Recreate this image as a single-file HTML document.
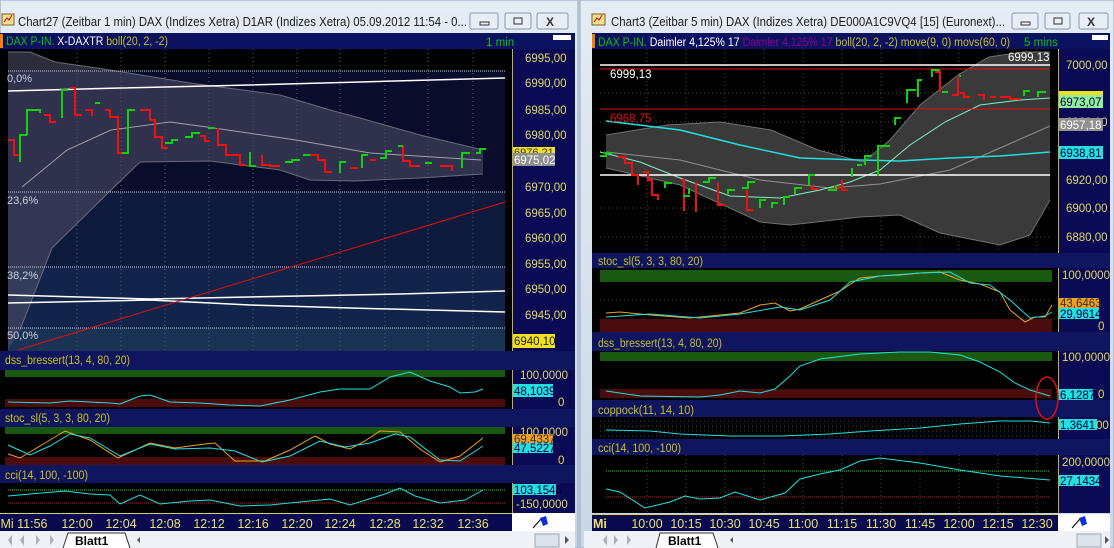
<!DOCTYPE html>
<html><head><meta charset="utf-8"><style>
html,body{margin:0;padding:0;background:#d6e0ea;}
svg{display:block;font-family:"Liberation Sans",sans-serif;}
</style></head><body>
<svg width="1114" height="548" viewBox="0 0 1114 548" xmlns="http://www.w3.org/2000/svg">
<defs>
<linearGradient id="tb" x1="0" y1="0" x2="0" y2="1"><stop offset="0" stop-color="#e4ecf4"/><stop offset="1" stop-color="#c9d7e6"/></linearGradient>
</defs>
<rect width="1114" height="548" fill="#d6e0ea"/>
<!-- ===== LEFT WINDOW ===== -->
<rect x="0" y="0" width="578" height="548" fill="url(#tb)" stroke="#8fa5bd"/>
<rect x="2" y="14" width="12" height="11" fill="#f0e090" stroke="#806020"/><path d="M4 22 l3 -4 l2 2 l3 -5" stroke="#c00" fill="none"/>
<text x="18" y="26" font-size="12.5" fill="#202020" textLength="449" lengthAdjust="spacingAndGlyphs">Chart27 (Zeitbar 1 min)  DAX (Indizes Xetra) D1AR (Indizes Xetra) 05.09.2012 11:54 - 0...</text>
<g fill="#e8eef5" stroke="#8898aa"><rect x="470" y="13" width="28" height="16" rx="2"/><rect x="505" y="13" width="26" height="16" rx="2"/><rect x="537" y="13" width="31" height="16" rx="2"/></g>
<rect x="480" y="22" width="9" height="3" fill="none" stroke="#333"/><rect x="514" y="18" width="8" height="6" fill="none" stroke="#333"/>
<text x="546" y="26" font-size="12" font-weight="bold" fill="#333">X</text>
<rect x="0" y="33" width="575" height="16" fill="#0c1260"/>
<rect x="0" y="34" width="3" height="14" fill="#f08000"/>
<rect x="553" y="35" width="18" height="5" fill="#fff"/>
<text x="6" y="45" font-size="11.5" textLength="162" lengthAdjust="spacingAndGlyphs"><tspan fill="#10c010">DAX P-IN.</tspan><tspan fill="#fff"> X-DAXTR</tspan><tspan fill="#c8c020"> boll(20, 2, -2)</tspan></text>
<text x="486" y="46" font-size="11.5" fill="#10c010">1 min</text>
<!-- main plot -->
<rect x="0" y="49" width="512" height="302" fill="#000"/>
<rect x="8" y="71" width="497" height="121" fill="#0a0c2c"/>
<rect x="8" y="192" width="497" height="75" fill="#0e1a3c"/>
<rect x="8" y="267" width="497" height="61" fill="#13244a"/>
<rect x="8" y="328" width="497" height="23" fill="#1a3254"/>
<g stroke="#5a6070" stroke-dasharray="1,3"><path d="M77 49V350M121 49V350M165 49V350M209 49V350M253 49V350M297 49V350M340 49V350M385 49V350M428 49V350M473 49V350"/></g>
<path d="M8 52 L30 52 L55 62 L110 70 L190 83 L280 95 L330 110 L360 118 L420 135 L483 150 L483 174 L420 178 L355 181 L310 180 L280 170 L210 161 L140 162 L111 190 L52 248 L20 330 L8 350 Z" fill="#50506a" fill-opacity="0.55"/>
<path d="M8 52 L30 52 L55 62 L110 70 L190 83 L280 95 L330 110 L360 118 L420 135 L483 150" stroke="#6a6a7a" fill="none"/>
<path d="M483 174 L420 178 L355 181 L310 180 L280 170 L210 161 L140 162 L111 190 L52 248 L20 330" stroke="#6a6a7a" fill="none"/>
<path d="M22 187 L67 150 L111 130 L170 122 L207 127 L296 140 L370 153 L481 160" stroke="#a0a0a8" fill="none"/>
<g stroke="#c8d0e0" stroke-dasharray="1,1"><path d="M8 71H505M8 192H505M8 267H505M8 328H505"/></g>
<g font-size="11" fill="#c8d0e0"><text x="7" y="82">0,0%</text><text x="7" y="204">23,6%</text><text x="7" y="279">38,2%</text><text x="7" y="339">50,0%</text></g>
<path d="M8 91 L120 88 L250 85 L360 82 L505 78" stroke="#fff" stroke-width="1.5" fill="none"/>
<path d="M8 295 L150 299 L300 296 L400 294 L505 291" stroke="#fff" stroke-width="1.5" fill="none"/>
<path d="M8 303 L150 300 L250 305 L350 308 L505 312" stroke="#fff" stroke-width="1.5" fill="none"/>
<path d="M18 350 L505 202" stroke="#e01010" fill="none"/>
<path d="M8 140H14V155H20M44 115H50V122H56M70 88H75V115H82M85 110H92V116M105 110H110V117H118V153H122M140 110H150V120H155V137H162V148H168M200 136H205V141H210M218 128V145H226V155H240V165H245M262 155V165H270V166H280M310 155H318V160H325V172H332M350 168H358M370 160H376M403 146V161H410V166H420M440 166H452V171" stroke="#f01010" stroke-width="2" fill="none"/>
<path d="M20 162V135H27M27 135V110H40V113M62 118V90H68M95 103H100M122 153H128V110H135M165 143H172V140H178M185 137H192V133H200M208 128H214M250 152V166H256M285 162H292V160H300M303 155H310M340 173V162H346M362 168V155H368M380 158H386V151H392M398 146H403M425 163H432M462 168V153H470M476 153H480V149H486" stroke="#10d010" stroke-width="2" fill="none"/>
<rect x="512" y="49" width="63" height="302" fill="#0a0a55"/>
<path d="M512.5 49V351" stroke="#c0b040"/>
<g font-size="11.5" fill="#e0d860">
<text x="525" y="62">6995,00</text><text x="525" y="87">6990,00</text><text x="525" y="114">6985,00</text><text x="525" y="139">6980,00</text>
<text x="525" y="191">6970,00</text><text x="525" y="217">6965,00</text><text x="525" y="242">6960,00</text><text x="525" y="268">6955,00</text><text x="525" y="293">6950,00</text><text x="525" y="319">6945,00</text></g>
<rect x="513" y="147" width="42" height="9" fill="#f0e020"/><text x="514" y="156" font-size="11" fill="#333">6976,21</text>
<rect x="513" y="153" width="42" height="13" fill="#909090"/><text x="514" y="164" font-size="11.5" fill="#fff">6975,02</text>
<rect x="513" y="334" width="42" height="14" fill="#f0e020"/><text x="514" y="345" font-size="11.5" fill="#222">6940,10</text>
<!-- dss -->
<rect x="0" y="351" width="575" height="19" fill="#101560"/>
<text x="5" y="364" font-size="11.5" fill="#c8c020" textLength="125" lengthAdjust="spacingAndGlyphs">dss_bressert(13, 4, 80, 20)</text>
<rect x="0" y="370" width="512" height="39" fill="#000"/>
<rect x="5" y="370" width="500" height="7" fill="#1a5a10"/><rect x="5" y="399" width="500" height="8" fill="#4a0c0c"/>
<path d="M8 402 L50 403 L70 401 L110 403 L120 404 L140 396 L150 395 L170 402 L200 403 L230 405 L260 406 L290 400 L320 392 L340 389 L370 389 L390 377 L410 372 L430 381 L450 387 L460 393 L475 392 L483 389" stroke="#20e0e0" fill="none"/>
<rect x="512" y="370" width="63" height="39" fill="#0a0a55"/><path d="M512.5 370V409" stroke="#c0b040"/>
<text x="520" y="379" font-size="11.5" fill="#e0d860">100,0000</text><text x="558" y="406" font-size="11.5" fill="#e0d860">0</text>
<rect x="513" y="384" width="40" height="13" fill="#20e0e0"/><text x="514" y="395" font-size="11.5" fill="#004">48,1039</text>
<!-- stoc -->
<rect x="0" y="409" width="575" height="18" fill="#101560"/>
<text x="5" y="422" font-size="11.5" fill="#c8c020" textLength="105" lengthAdjust="spacingAndGlyphs">stoc_sl(5, 3, 3, 80, 20)</text>
<rect x="0" y="427" width="512" height="38" fill="#000"/>
<rect x="5" y="427" width="500" height="7" fill="#1a5a10"/><rect x="5" y="457" width="500" height="8" fill="#4a0c0c"/>
<path d="M8 454 L20 458 L40 446 L65 431 L90 440 L118 458 L150 443 L175 448 L205 444 L215 443 L235 461 L265 461 L290 450 L315 436 L330 444 L350 449 L365 441 L380 431 L400 432 L420 449 L440 462 L460 456 L483 438" stroke="#f0a020" fill="none"/>
<path d="M8 445 L30 455 L50 446 L70 434 L90 438 L120 456 L150 444 L175 449 L210 448 L235 451 L262 462 L290 456 L320 441 L345 447 L370 443 L395 434 L410 437 L440 460 L460 461 L483 446" stroke="#20e0e0" fill="none"/>
<rect x="512" y="427" width="63" height="38" fill="#0a0a55"/><path d="M512.5 427V465" stroke="#c0b040"/>
<text x="520" y="436" font-size="11.5" fill="#e0d860">100,0000</text><text x="558" y="464" font-size="11.5" fill="#e0d860">0</text>
<rect x="513" y="434" width="40" height="10" fill="#f0a020"/><text x="514" y="443" font-size="11.5" fill="#333">69,4337</text>
<rect x="513" y="443" width="40" height="10" fill="#20e0e0"/><text x="514" y="452" font-size="11.5" fill="#004">47,5227</text>
<!-- cci -->
<rect x="0" y="465" width="575" height="18" fill="#101560"/>
<text x="5" y="479" font-size="11.5" fill="#c8c020" textLength="83" lengthAdjust="spacingAndGlyphs">cci(14, 100, -100)</text>
<rect x="0" y="483" width="512" height="30" fill="#000"/>
<path d="M8 490H505" stroke="#30e030" stroke-dasharray="1,1"/><path d="M8 503H505" stroke="#d02020" stroke-dasharray="1,1"/>
<path d="M8 496 L30 494 L65 491 L90 494 L110 495 L120 504 L140 495 L160 504 L190 501 L210 500 L240 506 L270 505 L300 502 L330 499 L350 505 L385 494 L400 488 L415 496 L440 503 L465 500 L483 490" stroke="#20e0e0" fill="none"/>
<rect x="512" y="483" width="63" height="30" fill="#0a0a55"/><path d="M512.5 483V513" stroke="#c0b040"/>
<rect x="513" y="484" width="43" height="11" fill="#20e0e0"/><text x="514" y="494" font-size="11.5" fill="#004">103,1545</text>
<text x="516" y="508" font-size="11.5" fill="#e0d860">-150,0000</text>
<rect x="0" y="513" width="512" height="18" fill="#0a0a50"/><path d="M0 513.5H512" stroke="#d8d060"/>
<g font-size="12.5" fill="#e8e070" text-anchor="middle"><text x="24" y="528">Mi 11:56</text><text x="77" y="528">12:00</text><text x="121" y="528">12:04</text><text x="165" y="528">12:08</text><text x="209" y="528">12:12</text><text x="253" y="528">12:16</text><text x="297" y="528">12:20</text><text x="340" y="528">12:24</text><text x="385" y="528">12:28</text><text x="428" y="528">12:32</text><text x="473" y="528">12:36</text></g>
<rect x="512" y="513" width="63" height="18" fill="#fff"/>
<path d="M533 528 L541 519" stroke="#000"/><path d="M540 518 L546 516 L548 524 L543 526Z" fill="#1030e0"/>
<rect x="0" y="531" width="575" height="17" fill="#eef2f6"/>
<g fill="#a8b0b8"><path d="M4 535V546M8 540l4 -5v11zM20 540l4 -5v11zM36 535l4 5l-4 5zM50 535l4 5l-4 5zM56 535V546"/></g>
<path d="M63 548 L68 533 H125 L130 548" fill="#fff" stroke="#333"/>
<text x="75" y="545" font-size="12" font-weight="bold" fill="#000">Blatt1</text>
<path d="M140 537l-3 3l3 3" fill="#555"/>
<rect x="535" y="534" width="24" height="13" fill="#dde3ea" stroke="#a0a8b0"/>
<path d="M565 536l4 4l-4 4z" fill="#555"/>
<!-- ===== RIGHT WINDOW ===== -->
<rect x="580" y="0" width="534" height="548" fill="url(#tb)" stroke="#8fa5bd"/>
<rect x="592" y="14" width="13" height="11" fill="#f0e090" stroke="#806020"/><path d="M594 22 l3 -4 l2 2 l3 -5" stroke="#c00" fill="none"/>
<text x="611" y="26" font-size="12.5" fill="#202020" textLength="394" lengthAdjust="spacingAndGlyphs">Chart3 (Zeitbar 5 min)  DAX (Indizes Xetra) DE000A1C9VQ4 [15] (Euronext)...</text>
<g fill="#e8eef5" stroke="#8898aa"><rect x="1012" y="13" width="26" height="16" rx="2"/><rect x="1045" y="13" width="25" height="16" rx="2"/><rect x="1079" y="13" width="29" height="16" rx="2"/></g>
<rect x="1021" y="22" width="9" height="3" fill="none" stroke="#333"/><rect x="1054" y="18" width="8" height="6" fill="none" stroke="#333"/>
<text x="1087" y="26" font-size="12" font-weight="bold" fill="#333">X</text>
<rect x="592" y="33" width="518" height="16" fill="#0c1260"/>
<rect x="592" y="34" width="3" height="14" fill="#f08000"/><rect x="1092" y="35" width="16" height="5" fill="#fff"/>
<text x="598" y="46" font-size="11.5" textLength="412" lengthAdjust="spacingAndGlyphs"><tspan fill="#10c010">DAX P-IN.</tspan><tspan fill="#fff"> Daimler  4,125% 17 </tspan><tspan fill="#900090">Daimler  4,125% 17 </tspan><tspan fill="#c8c020">boll(20, 2, -2) move(9, 0) movs(60, 0)</tspan></text>
<text x="1024" y="46" font-size="11.5" fill="#10c010">5 mins</text>
<rect x="592" y="49" width="466" height="204" fill="#000"/>
<g stroke="#4a4a4a" stroke-dasharray="1,3"><path d="M647 49V253M686 49V253M725 49V253M764 49V253M803 49V253M842 49V253M881 49V253M920 49V253M959 49V253M998 49V253M1037 49V253M600 93H1050M600 122H1050M600 151H1050M600 208H1050M600 237H1050"/></g>
<path d="M606 135 L667 125 L720 122 L771 130 L818 150 L863 162 L890 140 L920 105 L958 75 L989 57 L1023 52 L1050 52 L1050 200 L1030 235 L1000 245 L940 233 L900 215 L860 217 L790 225 L760 222 L680 185 L606 168 Z" fill="#3a3a3a"/>
<path d="M606 135 L667 125 L720 122 L771 130 L818 150 L863 162 L890 140 L920 105 L958 75 L989 57 L1023 52 L1050 52" stroke="#707070" fill="none"/>
<path d="M1050 200 L1030 235 L1000 245 L940 233 L900 215 L860 217 L790 225 L760 222 L680 185 L606 168" stroke="#707070" fill="none"/>
<path d="M606 152 L680 160 L760 180 L830 188 L880 184 L950 170 L1000 148 L1050 126" stroke="#909090" fill="none"/>
<path d="M606 121 L680 130 L740 145 L800 158 L860 160 L900 161 L950 158 L1000 156 L1050 152" stroke="#20e0e0" stroke-width="1.5" fill="none"/>
<path d="M600 152 L640 162 L680 178 L730 196 L780 198 L820 190 L850 182 L880 170 L910 145 L945 122 L980 105 L1020 100 L1050 98" stroke="#80f0c0" fill="none"/>
<path d="M600 65H1050" stroke="#fff" stroke-width="1.5"/><path d="M600 69H1050M600 109H1050" stroke="#e01010"/><path d="M600 175H1050" stroke="#fff" stroke-width="1.5"/>
<text x="610" y="78" font-size="11.5" fill="#fff">6999,13</text><text x="1008" y="61" font-size="11.5" fill="#fff">6999,13</text>
<text x="610" y="122" font-size="11.5" fill="#e01010">6968,75</text>
<path d="M618 157H625V163H632V175H638V185M643 172H648V180H652V195H658V200M681 180H684V211M696 182V212M718 183V205H725M747 190V210H753M812 185V189H818M835 185V188H840M842 180V190H848M940 92V72H935M952 95H958V77M960 93H964V97H970M978 95H984V100M990 97H996M1000 97H1010V99H1020" stroke="#f01010" stroke-width="2" fill="none"/>
<path d="M600 156H606V153H612M665 188V183H672M683 196H690M689 194V188M703 182H709V178H716M728 194V190H735M742 188H748V182H755M760 208V200H766M772 208V203H778M784 205V197H790M795 194V188H802M809 186V175H815M828 190H836V185M852 177V168M857 165H862M865 165V156H872M878 176V146H890M895 125V118H901M907 103V90H916M918 97V80H922M932 77V70H940M942 92H948M960 77V75M1024 96V91H1030M1038 97V92H1046" stroke="#10d010" stroke-width="2" fill="none"/>
<rect x="1050" y="49" width="8" height="204" fill="#000"/>
<rect x="1058" y="49" width="52" height="204" fill="#0a0a55"/><path d="M1058.5 49V253" stroke="#c0b040"/>
<g font-size="11.5" fill="#e0d860"><text x="1066" y="69">7000,00</text><text x="1066" y="126">6960,00</text><text x="1066" y="184">6920,00</text><text x="1066" y="212">6900,00</text><text x="1066" y="241">6880,00</text></g>
<rect x="1059" y="91" width="44" height="5" fill="#f0e020"/>
<rect x="1059" y="95" width="44" height="13" fill="#90f0a0"/><text x="1060" y="106" font-size="11.5" fill="#003">6973,07</text>
<rect x="1059" y="118" width="44" height="13" fill="#909090"/><text x="1060" y="129" font-size="11.5" fill="#fff">6957,18</text>
<rect x="1059" y="146" width="44" height="13" fill="#20e0e0"/><text x="1060" y="157" font-size="11.5" fill="#004">6938,81</text>
<!-- right stoc -->
<rect x="592" y="253" width="518" height="15" fill="#101560"/>
<text x="598" y="265" font-size="11.5" fill="#c8c020" textLength="105" lengthAdjust="spacingAndGlyphs">stoc_sl(5, 3, 3, 80, 20)</text>
<rect x="592" y="268" width="466" height="64" fill="#000"/>
<rect x="600" y="270" width="452" height="12" fill="#1a5a10"/><rect x="600" y="319" width="452" height="13" fill="#4a0c0c"/>
<g stroke="#4a4a4a" stroke-dasharray="1,3"><path d="M600 300H1050"/></g>
<path d="M606 313 L620 312 L650 315 L690 318 L720 315 L740 313 L760 305 L775 303 L790 311 L800 309 L840 291 L860 278 L880 276 L900 275 L920 273 L940 272 L960 280 L980 284 L1000 292 L1010 310 L1025 322 L1035 317 L1045 317 L1052 305" stroke="#f0a020" fill="none"/>
<path d="M606 317 L650 314 L700 318 L740 314 L780 307 L800 310 L830 300 L850 282 L880 276 L920 273 L950 272 L970 283 L990 285 L1010 300 L1030 318 L1045 316 L1052 312" stroke="#20e0e0" fill="none"/>
<rect x="1058" y="268" width="52" height="64" fill="#0a0a55"/><path d="M1058.5 268V332" stroke="#c0b040"/>
<text x="1062" y="279" font-size="11.5" fill="#e0d860">100,0000</text><text x="1098" y="330" font-size="11.5" fill="#e0d860">0</text>
<rect x="1059" y="298" width="40" height="10" fill="#f0a020"/><text x="1060" y="307" font-size="11.5" fill="#333">43,6463</text>
<rect x="1059" y="308" width="40" height="11" fill="#20e0e0"/><text x="1060" y="318" font-size="11.5" fill="#004">29,9614</text>
<!-- right dss -->
<rect x="592" y="332" width="518" height="19" fill="#101560"/>
<text x="598" y="347" font-size="11.5" fill="#c8c020" textLength="124" lengthAdjust="spacingAndGlyphs">dss_bressert(13, 4, 80, 20)</text>
<rect x="592" y="351" width="466" height="49" fill="#000"/>
<rect x="600" y="352" width="452" height="9" fill="#1a5a10"/><rect x="600" y="389" width="452" height="9" fill="#4a0c0c"/>
<path d="M606 391 L640 396 L700 397 L720 395 L740 391 L760 393 L775 389 L790 376 L800 366 L820 359 L860 354 L900 352 L930 352 L960 355 L980 362 L1000 372 L1015 383 L1030 390 L1050 396" stroke="#20e0e0" fill="none"/>
<rect x="1058" y="351" width="52" height="49" fill="#0a0a55"/><path d="M1058.5 351V400" stroke="#c0b040"/>
<text x="1062" y="361" font-size="11.5" fill="#e0d860">100,0000</text><text x="1098" y="398" font-size="11.5" fill="#e0d860">0</text>
<rect x="1059" y="389" width="34" height="11" fill="#20e0e0"/><text x="1060" y="399" font-size="11.5" fill="#004">6,1287</text>
<!-- coppock -->
<rect x="592" y="400" width="518" height="17" fill="#101560"/>
<text x="598" y="414" font-size="11.5" fill="#c8c020" textLength="96" lengthAdjust="spacingAndGlyphs">coppock(11, 14, 10)</text>
<rect x="592" y="417" width="466" height="22" fill="#000"/>
<g stroke="#4a4a4a" stroke-dasharray="1,3"><path d="M600 421H1050M600 426H1050M600 431H1050M600 436H1050"/></g>
<path d="M606 430 L650 431 L680 434 L730 436 L780 436 L830 434 L870 431 L920 428 L960 424 L1000 421 L1030 421 L1050 423" stroke="#20e0e0" fill="none"/>
<rect x="1058" y="417" width="52" height="22" fill="#0a0a55"/><path d="M1058.5 417V439" stroke="#c0b040"/>
<rect x="1059" y="419" width="38" height="11" fill="#20e0e0"/><text x="1060" y="429" font-size="11.5" fill="#004">1,3641</text>
<text x="1096" y="429" font-size="11.5" fill="#e0d860">00</text>
<!-- right cci -->
<rect x="592" y="439" width="518" height="16" fill="#101560"/>
<text x="598" y="452" font-size="11.5" fill="#c8c020" textLength="83" lengthAdjust="spacingAndGlyphs">cci(14, 100, -100)</text>
<rect x="592" y="455" width="466" height="58" fill="#000"/>
<g stroke="#4a4a4a" stroke-dasharray="1,3"><path d="M647 455V513M686 455V513M725 455V513M764 455V513M803 455V513M842 455V513M881 455V513M920 455V513M959 455V513M998 455V513M1037 455V513"/></g>
<path d="M606 471H1050" stroke="#30e030" stroke-dasharray="1,1"/><path d="M606 497H1050" stroke="#d02020" stroke-dasharray="1,1"/>
<path d="M606 489 L620 492 L645 508 L670 502 L685 496 L700 499 L720 498 L735 492 L760 500 L785 493 L800 479 L820 474 L840 470 L860 461 L880 458 L920 463 L960 470 L1000 476 L1050 480" stroke="#20e0e0" fill="none"/>
<rect x="1058" y="455" width="52" height="58" fill="#0a0a55"/><path d="M1058.5 455V513" stroke="#c0b040"/>
<text x="1062" y="466" font-size="11.5" fill="#e0d860">200,0000</text>
<rect x="1059" y="475" width="40" height="11" fill="#20e0e0"/><text x="1060" y="485" font-size="11.5" fill="#004">27,1434</text>
<ellipse cx="1047" cy="398" rx="11" ry="21" stroke="#e01010" stroke-width="1.5" fill="none"/>
<rect x="592" y="514" width="466" height="17" fill="#0a0a50"/><path d="M592 514.5H1058" stroke="#d8d060"/>
<text x="593" y="528" font-size="12.5" font-weight="bold" fill="#e8e070">Mi</text>
<g font-size="12.5" fill="#e8e070" text-anchor="middle"><text x="647" y="528">10:00</text><text x="686" y="528">10:15</text><text x="725" y="528">10:30</text><text x="764" y="528">10:45</text><text x="803" y="528">11:00</text><text x="842" y="528">11:15</text><text x="881" y="528">11:30</text><text x="920" y="528">11:45</text><text x="959" y="528">12:00</text><text x="998" y="528">12:15</text><text x="1037" y="528">12:30</text></g>
<rect x="1058" y="514" width="52" height="17" fill="#fff"/>
<path d="M1072 528 L1080 519" stroke="#000"/><path d="M1079 518 L1085 516 L1087 524 L1082 526Z" fill="#1030e0"/>
<rect x="584" y="531" width="526" height="17" fill="#eef2f6"/>
<g fill="#a8b0b8"><path d="M597 535V546M603 540l4 -5v11zM614 535l4 5l-4 5zM627 535l4 5l-4 5zM634 535V546"/></g>
<path d="M656 548 L660 533 H713 L718 548" fill="#fff" stroke="#333"/>
<text x="668" y="545" font-size="12" font-weight="bold" fill="#000">Blatt1</text>
<path d="M733 537l-3 3l3 3" fill="#555"/>
<rect x="1077" y="534" width="24" height="13" fill="#dde3ea" stroke="#a0a8b0"/>
<path d="M1105 536l4 4l-4 4z" fill="#555"/>
</svg>
</body></html>
